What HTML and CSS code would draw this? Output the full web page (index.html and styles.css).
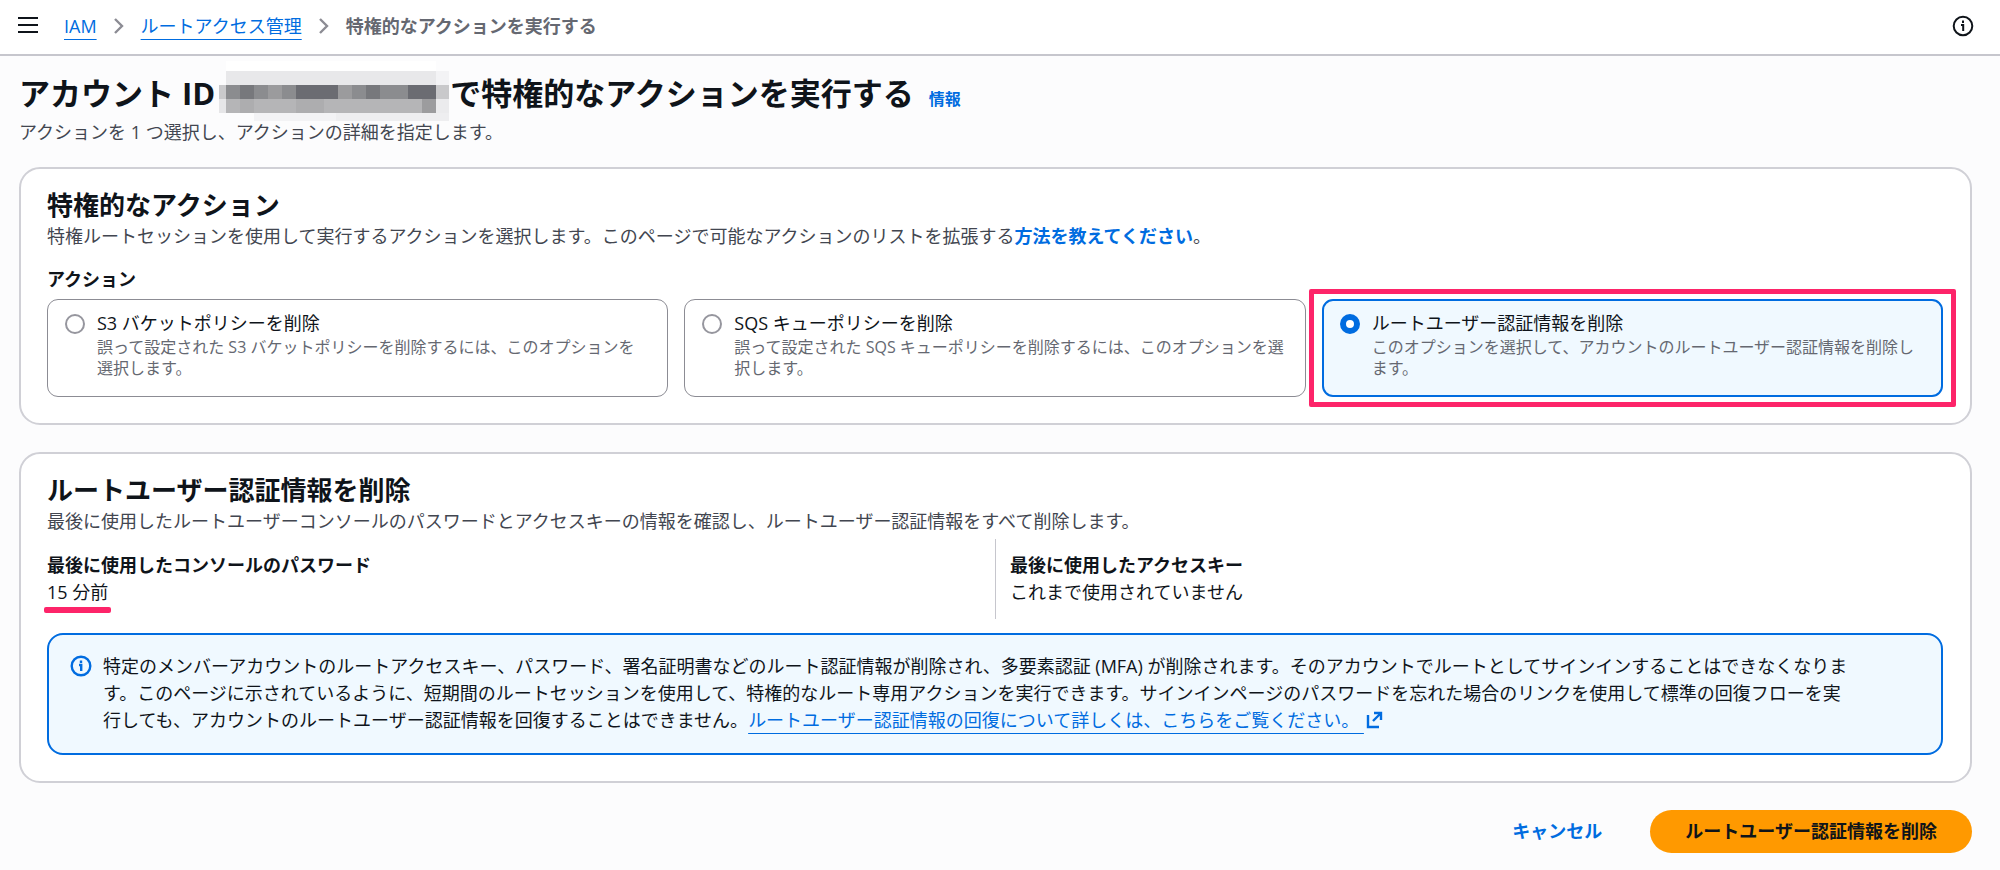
FILE: index.html
```html
<!DOCTYPE html>
<html lang="ja">
<head>
    <meta charset="UTF-8">
    <meta name="viewport" content="width=device-width, initial-scale=1.0">
    <title>特権的なアクションを実行する | IAM</title>
    <link rel="stylesheet" href="styles.css">
</head>
<body>
    <!-- Top bar -->
    <header class="topbar">
        <button class="icon-btn" type="button" aria-label="メニュー">
            <svg width="20" height="20" viewBox="0 0 20 20" fill="none" stroke="currentColor" stroke-width="2">
                <path d="M0 2h20M0 9h20M0 16h20"/>
            </svg>
        </button>
        <nav class="breadcrumbs" aria-label="パンくずリスト">
            <a href="#">IAM</a>
            <svg class="chevron" width="10" height="16" viewBox="0 0 10 16"><path d="M1 1l7 7-7 7"/></svg>
            <a href="#">ルートアクセス管理</a>
            <svg class="chevron" width="10" height="16" viewBox="0 0 10 16"><path d="M1 1l7 7-7 7"/></svg>
            <span class="current">特権的なアクションを実行する</span>
        </nav>
        <button class="icon-btn help" type="button" aria-label="情報">
            <svg width="22" height="22" viewBox="0 0 22 22" fill="none" stroke="currentColor" stroke-width="2">
                <circle cx="11" cy="11" r="9.3"/>
                <path d="M9 10h2.200v6M11 5.500v2.500"/>
            </svg>
        </button>
    </header>

    <main class="content">
        <!-- Page heading -->
        <div class="page-heading">
            <h1>アカウント ID<svg class="mosaic" width="230" height="60" viewBox="0 0 230 60" aria-hidden="true">
                <path fill="#ffffff" d="M7 0h210v10H7z"/>
                <path fill="#e8e8ea" d="M7 10h210v14H7z"/>
                <path fill="#f3f3f5" d="M217 10h13v14h-13z"/>
                <path fill="#c9c9cb" d="M0 24h7v14H0zM217 24h13v14h-13z"/>
                <path fill="#8b8c8f" d="M7 24h210v14H7z"/>
                <path fill="#77787c" d="M21 24h14v14H21zM147 24h14v14h-14z"/>
                <path fill="#9b9b9d" d="M49 24h14v14H49zM119 24h14v14h-14z"/>
                <path fill="#6b6c72" d="M77 24h42v14H77zM189 24h28v14h-28z"/>
                <path fill="#e6e6e8" d="M0 38h7v14H0z"/>
                <path fill="#b5b5b7" d="M7 38h210v14H7z"/>
                <path fill="#adadaf" d="M21 38h14v14H21zM77 38h28v14H77z"/>
                <path fill="#9c9c9e" d="M203 38h14v14h-14z"/>
                <path fill="#ebebed" d="M217 38h13v14h-13z"/>
                <path fill="#f3f3f5" d="M35 52h82v8H35z"/>
                <path fill="#eeeef0" d="M117 52h113v8H117z"/>
            </svg>で特権的なアクションを実行する</h1>
            <a class="info-link" href="#">情報</a>
        </div>
        <p class="page-description">アクションを 1 つ選択し、アクションの詳細を指定します。</p>

        <!-- Action selection -->
        <section class="card">
            <h2>特権的なアクション</h2>
            <p class="description">特権ルートセッションを使用して実行するアクションを選択します。このページで可能なアクションのリストを拡張する<a class="strong-link" href="#">方法を教えてください</a>。</p>

            <fieldset class="tiles-field">
                <legend>アクション</legend>
                <div class="tiles">
                    <label class="tile" for="action-s3">
                        <input type="radio" name="action" id="action-s3">
                        <span class="tile-text">
                            <span class="tile-title">S3 バケットポリシーを削除</span>
                            <span class="tile-description">誤って設定された S3 バケットポリシーを削除するには、このオプションを選択します。</span>
                        </span>
                    </label>
                    <label class="tile" for="action-sqs">
                        <input type="radio" name="action" id="action-sqs">
                        <span class="tile-text">
                            <span class="tile-title">SQS キューポリシーを削除</span>
                            <span class="tile-description">誤って設定された SQS キューポリシーを削除するには、このオプションを選択します。</span>
                        </span>
                    </label>
                    <label class="tile selected" for="action-root">
                        <input type="radio" name="action" id="action-root" checked>
                        <span class="tile-text">
                            <span class="tile-title">ルートユーザー認証情報を削除</span>
                            <span class="tile-description">このオプションを選択して、アカウントのルートユーザー認証情報を削除します。</span>
                        </span>
                    </label>
                </div>
            </fieldset>
        </section>

        <!-- Root credentials -->
        <section class="card">
            <h2>ルートユーザー認証情報を削除</h2>
            <p class="description">最後に使用したルートユーザーコンソールのパスワードとアクセスキーの情報を確認し、ルートユーザー認証情報をすべて削除します。</p>

            <dl class="details">
                <div class="detail">
                    <dt>最後に使用したコンソールのパスワード</dt>
                    <dd><span class="marked">15 分前</span></dd>
                </div>
                <div class="detail">
                    <dt>最後に使用したアクセスキー</dt>
                    <dd>これまで使用されていません</dd>
                </div>
            </dl>

            <div class="alert">
                <svg class="alert-icon" width="22" height="22" viewBox="0 0 22 22" fill="none" stroke="currentColor" stroke-width="2.4">
                    <circle cx="11" cy="11" r="9.3"/>
                    <path d="M9 10h2.200v6M11 5.500v2.500"/>
                </svg>
                <p>特定のメンバーアカウントのルートアクセスキー、パスワード、署名証明書などのルート認証情報が削除され、多要素認証 (MFA) が削除されます。そのアカウントでルートとしてサインインすることはできなくなります。このページに示されているように、短期間のルートセッションを使用して、特権的なルート専用アクションを実行できます。サインインページのパスワードを忘れた場合のリンクを使用して標準の回復フローを実行しても、アカウントのルートユーザー認証情報を回復することはできません。<a class="external" href="#">ルートユーザー認証情報の回復について詳しくは、こちらをご覧ください。&nbsp;<svg width="20" height="18" viewBox="0 0 20 18" fill="none" stroke="currentColor" stroke-width="2.4"><path d="M4 4v12h11M10 2h7v7M17 2l-8 8"/></svg></a></p>
            </div>
        </section>

        <!-- Form actions -->
        <div class="actions">
            <button class="btn btn-link" type="button">キャンセル</button>
            <button class="btn btn-primary" type="button">ルートユーザー認証情報を削除</button>
        </div>
    </main>
</body>
</html>
```
FILE: styles.css
```css
* {
    box-sizing: border-box;
}

body {
    margin: 0;
    background: #fcfcfd;
    color: #0f141a;
    font-family: "Open Sans", "Noto Sans CJK JP", sans-serif;
    font-size: 18px;
    line-height: 27px;
}

h1, h2, p, dl, dd {
    margin: 0;
}

a {
    color: #006ce0;
}

button {
    font: inherit;
    cursor: pointer;
}

/* Top bar */
.topbar {
    display: flex;
    align-items: center;
    height: 56px;
    padding: 0 26px 2px 18px;
    background: #fff;
    border-bottom: 2px solid #c6c6cd;
}

.icon-btn {
    display: flex;
    padding: 0;
    border: none;
    background: none;
    color: #0f141a;
}

.help {
    margin-left: auto;
}

.breadcrumbs {
    display: flex;
    align-items: center;
    gap: 17px;
    margin-left: 26px;
}

.breadcrumbs a {
    text-underline-offset: 6px;
    text-decoration-thickness: 1px;
}

.chevron {
    fill: none;
    stroke: #8c8c94;
    stroke-width: 2.4;
}

.current {
    color: #656871;
    font-weight: 700;
}

/* Page heading */
.content {
    padding: 17px 28px 17px 19px;
}

.page-heading {
    display: flex;
    align-items: baseline;
    gap: 15px;
}

h1 {
    font-size: 31px;
    line-height: 40px;
}

.mosaic {
    margin: -26px 1px -14px 4px;
    vertical-align: middle;
}

.info-link {
    font-size: 16px;
    font-weight: 700;
    line-height: 21px;
    text-decoration: none;
}

.page-description {
    margin: 6px 0 21px;
    color: #424650;
}

/* Cards */
.card {
    margin-bottom: 27px;
    padding: 20px 27px 26px 26px;
    background: #fff;
    border: 2px solid #d0d0d6;
    border-radius: 21px;
}

h2 {
    margin-bottom: 2px;
    font-size: 26px;
    line-height: 32px;
}

.description {
    color: #424650;
}

.strong-link {
    font-weight: 700;
    text-decoration: none;
}

/* Radio tiles */
.tiles-field {
    min-width: 0;
    margin: 16px 0 0;
    padding: 0;
    border: none;
}

legend {
    margin-bottom: 6px;
    padding: 0;
    font-weight: 700;
}

.tiles {
    display: grid;
    grid-template-columns: repeat(3, 1fr);
    gap: 16px;
}

.tile {
    position: relative;
    display: flex;
    gap: 12px;
    padding: 10px 17px 17px;
    background: #fff;
    border: 1px solid #8c8c94;
    border-radius: 11px;
}

.tile input {
    appearance: none;
    flex: none;
    width: 20px;
    height: 20px;
    margin: 4px 0 0;
    background: #fff;
    border: 2px solid #96969e;
    border-radius: 50%;
}

.tile input:checked {
    border: 6px solid #006ce0;
}

.tile-title,
.tile-description {
    display: block;
}

.tile-description {
    color: #656871;
    font-size: 16px;
    line-height: 21px;
}

.tile.selected {
    padding: 9px 16px 16px;
    background: #f0f9ff;
    border: 2px solid #006ce0;
}

/* Highlight frame around the chosen tile */
.tile.selected::after {
    content: "";
    position: absolute;
    inset: -12px -15px -12px -15px;
    border: 5px solid #fd2469;
    border-radius: 2px;
    pointer-events: none;
}

/* Last used details */
.details {
    display: grid;
    grid-template-columns: 1fr 1fr;
    margin: 4px 0 14px;
}

.detail {
    padding: 13px 0;
}

.detail + .detail {
    padding-left: 14px;
    border-left: 1px solid #c6c6cd;
}

dt {
    font-weight: 700;
}

.marked {
    position: relative;
}

.marked::after {
    content: "";
    position: absolute;
    right: -3px;
    bottom: -9px;
    left: -3px;
    height: 6px;
    background: #fd2469;
    border-radius: 2px;
}

/* Info alert */
.alert {
    display: flex;
    gap: 11px;
    padding: 18px 83px 19px 21px;
    background: #f0f9ff;
    border: 2px solid #006ce0;
    border-radius: 16px;
}

.alert-icon {
    flex: none;
    margin-top: 2px;
    color: #006ce0;
}

.external {
    text-underline-offset: 6px;
    text-decoration-thickness: 1px;
}

.external svg {
    vertical-align: -2px;
}

/* Form actions */
.actions {
    display: flex;
    justify-content: flex-end;
    gap: 22px;
}

.btn {
    padding: 8px 26px;
    border: none;
    border-radius: 22px;
    font-weight: 700;
}

.btn-link {
    background: none;
    color: #006ce0;
}

.btn-primary {
    padding: 8px 35px;
    background: #ff9900;
    color: #0f141a;
}
```
